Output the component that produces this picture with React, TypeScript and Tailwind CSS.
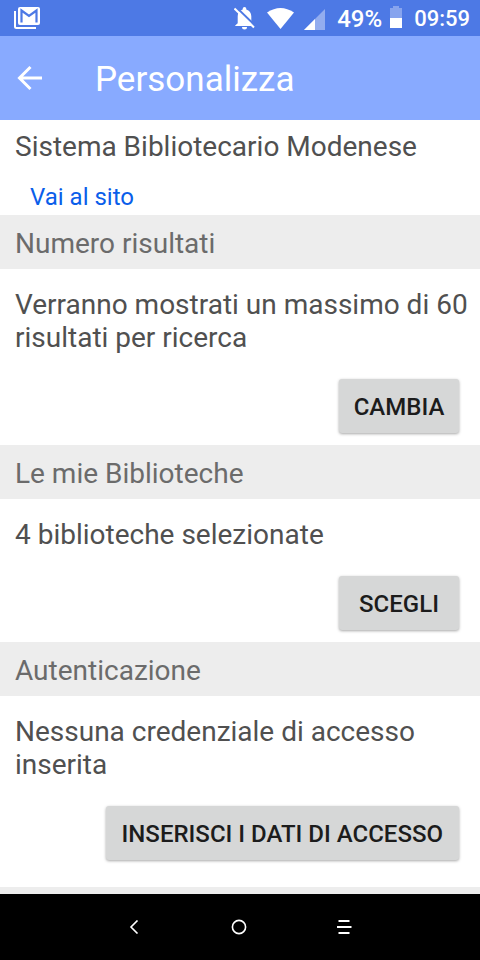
import type { ReactNode } from "react"

function MailStackIcon() {
  return (
    <svg className="w-[26px] h-[22px]" viewBox="0 0 26 22" fill="none">
      <path d="M1 4V19.500Q1 21 2.500 21H22" stroke="white" strokeWidth="2" />
      <rect x="4" width="22" height="18" rx="2" fill="white" />
      <path
        d="M7.500 15.500V3.500L15 9L22.500 3.500V15.500"
        stroke="#4d79e5"
        strokeWidth="2.200"
      />
    </svg>
  )
}

function BellOffIcon() {
  return (
    <svg className="w-[21px] h-[23px]" viewBox="0 0 21 23" fill="none">
      <path
        d="M10.500 0a1.800 1.800 0 0 1 1.800 1.800v.6c3.200.8 5 3.500 5 6.800v7l2 2.300v.5H1.200v-.5l2.500-2.300v-7c0-3.300 1.700-6 5-6.800v-.6A1.800 1.800 0 0 1 10.500 0Z"
        fill="white"
      />
      <path d="M8 20h5a2.500 2.500 0 0 1-5 0Z" fill="white" />
      <path d="M2.500 0.500L21.500 19" stroke="#4d79e5" strokeWidth="2" />
      <path d="M0.500 1.500L20 20.500" stroke="white" strokeWidth="2" />
    </svg>
  )
}

function WifiIcon() {
  return (
    <svg className="w-[27px] h-[21px]" viewBox="0 0 27 21">
      <path d="M0 4.500Q13.500 -4.500 27 4.500L13.500 21Z" fill="white" />
    </svg>
  )
}

function SignalIcon() {
  return (
    <svg className="w-[21px] h-[21px]" viewBox="0 0 21 21">
      <path d="M21 0V21H0Z" fill="#93adef" />
      <path d="M11 10V21H0Z" fill="white" />
    </svg>
  )
}

function BatteryIcon() {
  return (
    <svg className="w-3 h-[22px]" viewBox="0 0 12 22">
      <path d="M3 0H9V2H12V22H0V2H3Z" fill="#87a4ee" />
      <path d="M0 12H12V22H0Z" fill="white" />
    </svg>
  )
}

function StatusBar() {
  return (
    <div className="h-9 shrink-0 flex items-center justify-between bg-[#4d79e5] pl-3.5 pr-2.5 text-white">
      <MailStackIcon />
      <div className="flex items-center">
        <BellOffIcon />
        <div className="ml-3 flex">
          <WifiIcon />
        </div>
        <div className="ml-2.5 mt-0.5 flex">
          <SignalIcon />
        </div>
        <span className="ml-3 pt-0.5 text-2xl leading-9 font-medium">49%</span>
        <div className="ml-2 mb-0.5 flex">
          <BatteryIcon />
        </div>
        <span className="ml-3 pt-0.5 text-[22px] leading-9 font-medium">09:59</span>
      </div>
    </div>
  )
}

function SectionTitle({ children }: { children: ReactNode }) {
  return (
    <h2 className="bg-[#ededed] px-[15px] pt-3 pb-[9px] text-[28px] leading-[33px] text-[#6b6b6b]">
      {children}
    </h2>
  )
}

type SettingProps = {
  text: string
  action: string
  buttonPadding?: string
}

function Setting({ text, action, buttonPadding = "px-3" }: SettingProps) {
  return (
    <div className="pl-[15px] pt-[19px] pb-3 flex flex-col gap-[25px]">
      <p className="pr-2 text-[28px] leading-[33px] text-[#505050]">{text}</p>
      <button
        type="button"
        className={`${buttonPadding} self-end mr-[21px] h-[54px] min-w-[120px] pt-0.5 rounded-[3px] bg-[#d6d7d7] text-2xl font-medium text-[#1c1c1c] uppercase shadow-[0_1px_3px_rgba(0,0,0,0.35)]`}
      >
        {action}
      </button>
    </div>
  )
}

export default function App() {
  return (
    <div className="min-h-screen flex flex-col bg-white font-[Roboto,sans-serif]">
      <StatusBar />

      <header className="h-21 shrink-0 flex items-center bg-[#88aaff] px-4 text-white">
        <button type="button" aria-label="Indietro" className="w-[79px]">
          <svg className="w-[26px] h-[26px]" viewBox="0 0 26 26" fill="none">
            <path
              d="M26 13H4M14.500 2L3.500 13L14.500 24"
              stroke="white"
              strokeWidth="3"
            />
          </svg>
        </button>
        <h1 className="pt-1 text-[35px] leading-10">Personalizza</h1>
      </header>

      <main className="grow">
        <div className="px-[15px] pt-2.5">
          <p className="text-[28px] leading-[33px] text-[#505050]">
            Sistema Bibliotecario Modenese
          </p>
          <a
            href="#"
            className="block w-fit ml-[15px] mt-5 pb-1 text-2xl leading-7 text-[#0a5eea]"
          >
            Vai al sito
          </a>
        </div>

        <SectionTitle>Numero risultati</SectionTitle>
        <Setting
          text="Verranno mostrati un massimo di 60 risultati per ricerca"
          action="Cambia"
        />

        <SectionTitle>Le mie Biblioteche</SectionTitle>
        <Setting text="4 biblioteche selezionate" action="Scegli" />

        <SectionTitle>Autenticazione</SectionTitle>
        <Setting
          text="Nessuna credenziale di accesso inserita"
          action="Inserisci i dati di accesso"
          buttonPadding="px-4"
        />
        <div className="mt-[15px] h-[7px] bg-[#ededed]" />
      </main>

      <nav className="h-[66px] shrink-0 flex items-center justify-center gap-[81px] bg-black pr-0.5">
        <button type="button" aria-label="Back" className="w-6 flex justify-center">
          <svg className="w-2.5 h-3.5" viewBox="0 0 10 14" fill="none">
            <path d="M8.500 0.500L2 7L8.500 13.500" stroke="white" strokeWidth="1.600" />
          </svg>
        </button>
        <button type="button" aria-label="Home" className="w-6 flex justify-center">
          <svg className="w-4 h-4" viewBox="0 0 16 16" fill="none">
            <circle cx="8" cy="8" r="6.600" stroke="white" strokeWidth="1.600" />
          </svg>
        </button>
        <button type="button" aria-label="Menu" className="w-6 flex justify-center">
          <svg className="w-4 h-4" viewBox="0 0 16 16" fill="none">
            <path d="M2.500 2H13.500M1 8H15.500M2.500 14H13.500" stroke="white" strokeWidth="1.800" />
          </svg>
        </button>
      </nav>
    </div>
  )
}
